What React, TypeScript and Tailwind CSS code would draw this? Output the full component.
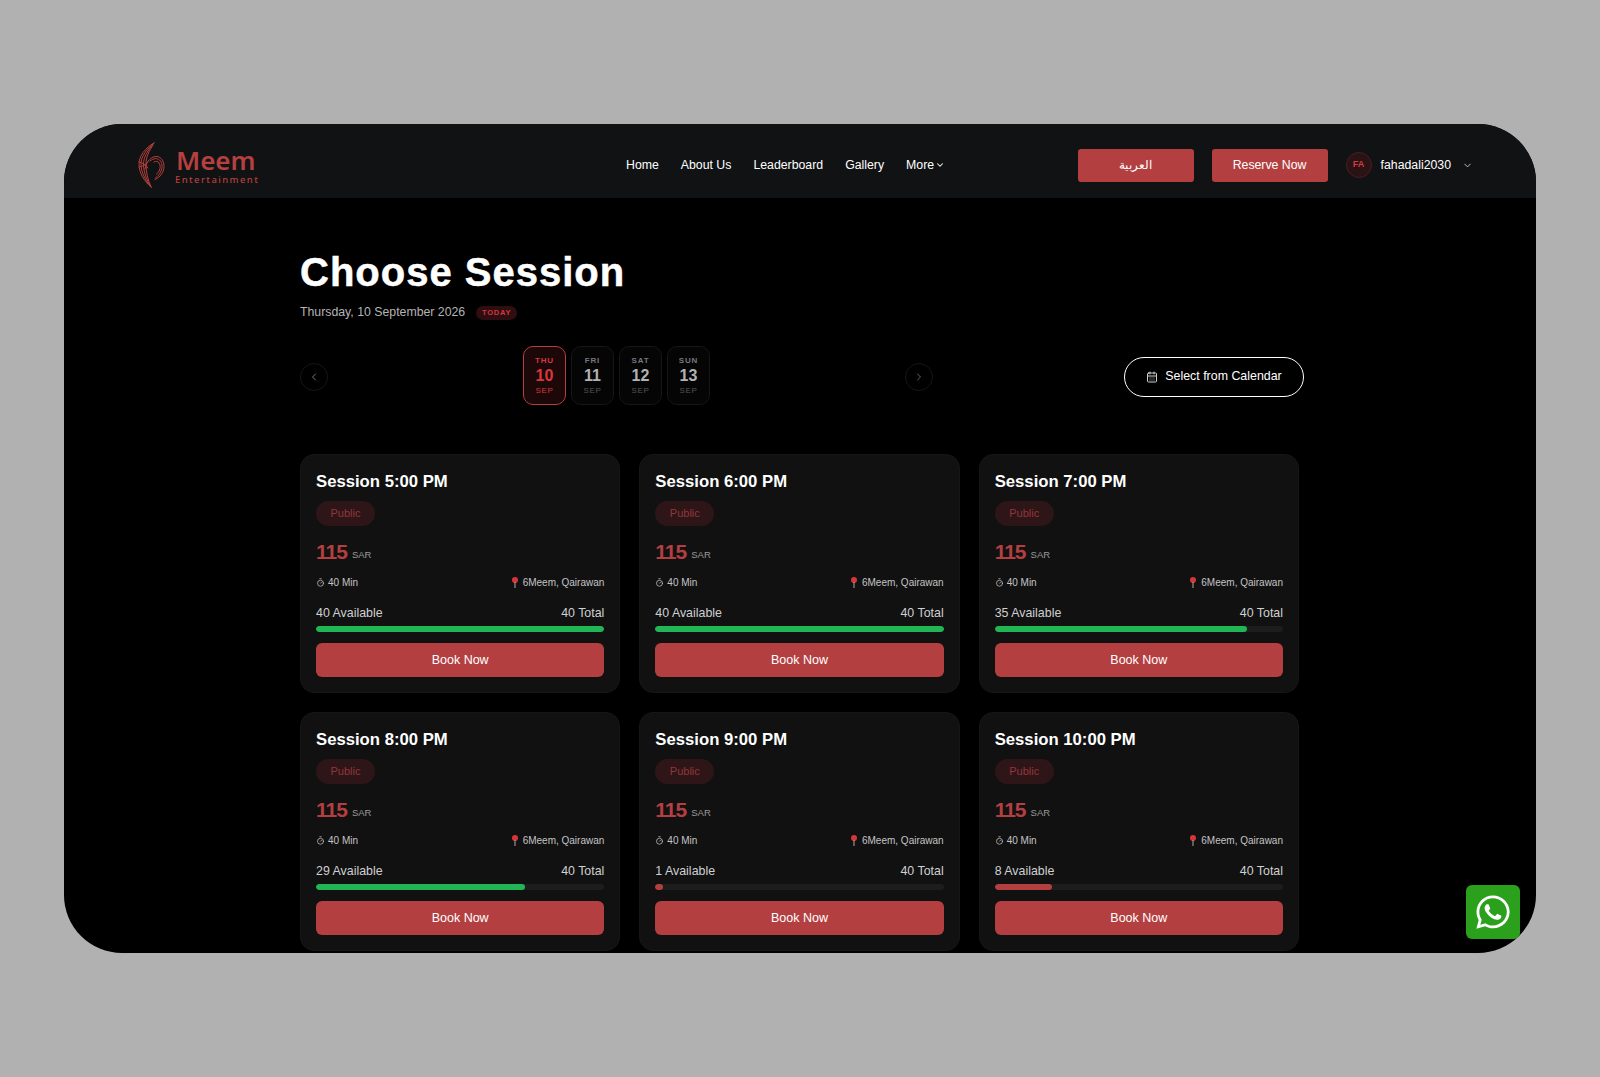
import { CalendarDays, ChevronDown, ChevronLeft, ChevronRight, Timer } from "lucide-react";
import { FaWhatsapp } from "react-icons/fa";

const days = [
  { name: "THU", num: "10", active: true },
  { name: "FRI", num: "11", active: false },
  { name: "SAT", num: "12", active: false },
  { name: "SUN", num: "13", active: false },
];

const sessions = [
  { time: "5:00 PM", left: 40 },
  { time: "6:00 PM", left: 40 },
  { time: "7:00 PM", left: 35 },
  { time: "8:00 PM", left: 29 },
  { time: "9:00 PM", left: 1 },
  { time: "10:00 PM", left: 8 },
];

const Logo = () => (
  <svg width="27" height="46" viewBox="0 0 27 46" fill="none" stroke="#b5403f" strokeWidth="1" strokeLinecap="round">
    <path d="M16 1C7 6 1 14 1 22c0 9 5 17 12 23" />
    <path d="M16 1C9 7 3 14 3 22c0 8 4 16 10 23" />
    <path d="M16 1C10 8 5.500 15 5.500 22c0 8 3 16 7.500 23" />
    <path d="M15 3C11 9 8 15 8 22c0 8 1.500 15 5 23" />
    <path d="M7 27c1-8 7-13 12-12.500 4.500.5 7 5 7 10 0 6-4 11-9 13" />
    <path d="M12 19c4-3 7-3 9.500-1 3 2.500 3 7 2 10-1 3-3 6-6 8" />
    <path d="M16 20c2-1 4-1 5 1 1.500 2 1.500 5 .5 7-.5 1.500-1.500 3-3 4" />
    <path d="M1 20c3 .5 7 3 9 6M1 25c3-.5 7-2 9-5" />
  </svg>
);

const Pin = () => (
  <svg width="8" height="11" viewBox="0 0 8 11" className="shrink-0">
    <circle cx="4" cy="3" r="3" fill="#d8353a" />
    <rect x="3.500" y="5" width="1" height="6" fill="#a9a9a9" />
  </svg>
);

const SessionCard = ({ time, left }: { time: string; left: number }) => {
  const pct = (left / 40) * 100;
  return (
    <div className="h-[239px] rounded-[14px] border border-[#161617] bg-[#111112] px-[15px] pt-[14px]">
      <h3 className="text-[16.700px] leading-[26px] font-bold text-white">Session {time}</h3>
      <span className="mt-[6px] flex h-[25px] w-[59px] items-center justify-center rounded-full bg-[#2e1618] text-[11px] text-[#93353a]">
        Public
      </span>
      <div className="mt-[11px] flex h-[30px] items-center">
        <span className="text-[21px] font-bold tracking-[-1px] text-[#b33f40]">115</span>
        <span className="mt-[6px] ml-[5px] text-[9.500px] text-[#9a9a9a]">SAR</span>
      </div>
      <div className="mt-[8px] flex h-[14px] items-center justify-between text-[10px] text-[#c4c4c4]">
        <span className="flex items-center gap-[3px]">
          <Timer size={9} strokeWidth={2} />
          40 Min
        </span>
        <span className="flex items-center gap-[4px]">
          <Pin />
          6Meem, Qairawan
        </span>
      </div>
      <div className="mt-[15px] flex h-[18px] items-center justify-between text-[12.400px] text-[#d0d0d0]">
        <span>{left} Available</span>
        <span>40 Total</span>
      </div>
      <div className="mt-[4px] h-[6px] overflow-hidden rounded-full bg-[#1d1d1e]">
        <div
          className={pct > 25 ? "h-full rounded-full bg-[#22b555]" : "h-full rounded-full bg-[#b33f40]"}
          style={{ width: pct + "%" }}
        />
      </div>
      <button className="mt-[11px] h-[34px] w-full rounded-[6px] bg-[#b33f40] text-[12.500px] text-white">
        Book Now
      </button>
    </div>
  );
};

const App = () => {
  return (
    <div className="h-[1077px] overflow-hidden bg-[#b1b1b1] px-[64px] pt-[124px] font-['Liberation_Sans',sans-serif]">
      <div className="relative h-[829px] overflow-hidden rounded-[58px] bg-black">
        <header className="flex h-[74px] items-center bg-[#111214] pt-[8px] pr-[63px] pl-[74px]">
          <div className="flex w-[488px] items-center">
            <Logo />
            <div className="ml-[10px] flex flex-col">
              <span className="ml-[1px] font-['Noto_Sans',sans-serif] text-[26px] leading-[28px] font-semibold text-[#b5403f]">
                Meem
              </span>
              <span className="font-['Noto_Sans',sans-serif] text-[9.500px] leading-[11px] font-medium tracking-[1.400px] text-[#b5403f]">
                Entertainment
              </span>
            </div>
          </div>
          <nav className="flex items-center gap-[22px] text-[12.300px] text-white">
            <span>Home</span>
            <span>About Us</span>
            <span>Leaderboard</span>
            <span>Gallery</span>
            <span className="flex items-center gap-[1px]">
              More
              <ChevronDown size={10} strokeWidth={2.500} />
            </span>
          </nav>
          <div className="ml-auto flex items-center">
            <button className="h-[33px] w-[116px] rounded-[3px] bg-[#b33f40] text-[12px] text-white">العربية</button>
            <button className="ml-[18px] h-[33px] w-[116px] rounded-[3px] bg-[#b33f40] text-[12.300px] text-white">
              Reserve Now
            </button>
            <span className="ml-[18px] flex h-[26px] w-[26px] items-center justify-center rounded-full border border-[#4a1d20] bg-[#2a1215] text-[9px] font-bold text-[#d23b40]">
              FA
            </span>
            <span className="ml-[9px] text-[12.300px] text-white">fahadali2030</span>
            <ChevronDown className="ml-[11px] text-[#c9c9c9]" size={11} strokeWidth={2} />
          </div>
        </header>

        <main className="pt-[47px] pl-[236px]">
          <h1 className="text-[40px] leading-[54px] font-bold tracking-[1px] text-white [-webkit-text-stroke:0.5px_white]">
            Choose Session
          </h1>
          <div className="mt-[3px] flex h-[20px] items-center">
            <span className="text-[12.300px] text-[#b4b4b4]">Thursday, 10 September 2026</span>
            <span className="mt-[2px] ml-[11px] flex h-[14px] w-[41px] items-center justify-center rounded-full bg-[#2f0e11] text-[7.500px] font-bold tracking-[0.8px] text-[#d2383d]">
              TODAY
            </span>
          </div>

          <div className="mt-[24px] flex h-[59px] items-center">
            <div className="flex w-[633px] items-center justify-between">
              <button className="mt-[2px] flex h-[28px] w-[28px] items-center justify-center rounded-full border border-[#161616] text-[#777]">
                <ChevronLeft size={12} />
              </button>
              <div className="flex gap-[5px]">
                {days.map((d) => (
                  <div
                    key={d.num}
                    className={
                      d.active
                        ? "flex h-[59px] w-[43px] flex-col items-center justify-center rounded-[10px] border border-[#b33f40] bg-[#1c0709] text-[#d9373c]"
                        : "flex h-[59px] w-[43px] flex-col items-center justify-center rounded-[10px] border border-[#161617] bg-[#050505] text-[#b2b2b5]"
                    }
                  >
                    <span
                      className={
                        d.active
                          ? "text-[8px] leading-[12px] font-bold tracking-[0.8px]"
                          : "text-[8px] leading-[12px] font-bold tracking-[0.8px] text-[#77777c]"
                      }
                    >
                      {d.name}
                    </span>
                    <span className="text-[16px] leading-[18px] font-bold">{d.num}</span>
                    <span
                      className={
                        d.active
                          ? "text-[8px] leading-[12px] tracking-[0.6px]"
                          : "text-[8px] leading-[12px] tracking-[0.6px] text-[#55555a]"
                      }
                    >
                      SEP
                    </span>
                  </div>
                ))}
              </div>
              <button className="mt-[2px] flex h-[28px] w-[28px] items-center justify-center rounded-full border border-[#161616] text-[#666]">
                <ChevronRight size={12} />
              </button>
            </div>
            <button className="mt-[2px] ml-[191px] flex h-[40px] w-[180px] items-center justify-center gap-[7px] rounded-full border-[1.500px] border-white text-[12.400px] text-white">
              <CalendarDays size={12} className="text-[#cfcfcf]" />
              Select from Calendar
            </button>
          </div>

          <div className="mt-[49px] grid w-[999px] grid-cols-3 gap-x-[19px] gap-y-[19px]">
            {sessions.map((s) => (
              <SessionCard key={s.time} time={s.time} left={s.left} />
            ))}
          </div>
        </main>

        <button className="absolute top-[761px] left-[1402px] flex h-[54px] w-[54px] items-center justify-center rounded-[6px] bg-[#2ba01c] text-white">
          <FaWhatsapp size={38} />
        </button>
      </div>
    </div>
  );
};

export default App;
